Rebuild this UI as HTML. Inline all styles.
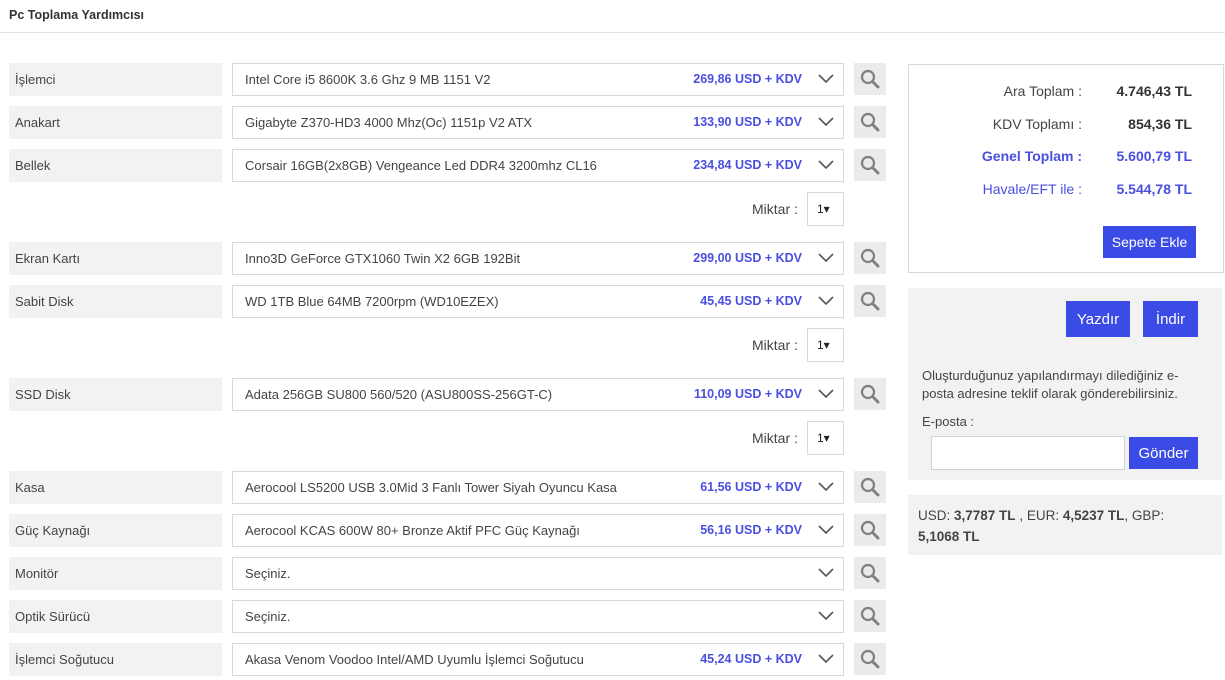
<!DOCTYPE html>
<html><head><meta charset="utf-8"><style>
*{margin:0;padding:0;box-sizing:border-box}
body{width:1225px;height:680px;background:#fff;font-family:"Liberation Sans",sans-serif;color:#333;position:relative;overflow:hidden;font-size:13px}
.abs{position:absolute}
.title{left:9px;top:8px;font-size:12.5px;font-weight:bold;color:#333}
.hr{left:0;top:32px;width:1225px;height:1px;background:#e2e2e2}
.lab{left:9px;width:213px;height:33px;background:#f2f2f2;line-height:33px;padding-left:6px;font-size:13px;color:#444}
.sel{left:232px;width:612px;height:33px;border:1px solid #d8d8d8;line-height:31px;padding-left:12px;font-size:13px;color:#444}
.sel .p{position:absolute;right:41px;top:0;color:#4a4fe0;font-weight:bold;font-size:12.5px}
.sel svg{position:absolute;right:9px;top:10px}
.sb{left:854px;width:32px;height:32px;background:#ebebeb}
.sb svg{position:absolute;left:6px;top:6px}
.mk{left:752px;font-size:14px;color:#444;line-height:34px}
.mb{left:807px;width:37px;height:34px;border:1px solid #d8d8d8;font-size:12px;line-height:32px;padding-left:9px;color:#222}
.btn{background:#3b4be6;color:#fff;font-size:14px;text-align:center}
</style></head><body>
<div class="abs title">Pc Toplama Yardımcısı</div>
<div class="abs hr"></div>

<div class="abs lab" style="top:63px">İşlemci</div>
<div class="abs sel" style="top:63px">Intel Core i5 8600K 3.6 Ghz 9 MB 1151 V2<span class="p">269,86 USD + KDV</span><svg width="16" height="10"><path d="M1 1l7 7 7-7" fill="none" stroke="#555" stroke-width="1.6"/></svg></div>
<div class="abs sb" style="top:63px"><svg width="20" height="20"><circle cx="8" cy="8" r="6" fill="none" stroke="#808080" stroke-width="2.2"/><path d="M12.5 12.5l5.5 5.5" stroke="#808080" stroke-width="3" stroke-linecap="round"/></svg></div>

<div class="abs lab" style="top:106px">Anakart</div>
<div class="abs sel" style="top:106px">Gigabyte Z370-HD3 4000 Mhz(Oc) 1151p V2 ATX<span class="p">133,90 USD + KDV</span><svg width="16" height="10"><path d="M1 1l7 7 7-7" fill="none" stroke="#555" stroke-width="1.6"/></svg></div>
<div class="abs sb" style="top:106px"><svg width="20" height="20"><circle cx="8" cy="8" r="6" fill="none" stroke="#808080" stroke-width="2.2"/><path d="M12.5 12.5l5.5 5.5" stroke="#808080" stroke-width="3" stroke-linecap="round"/></svg></div>

<div class="abs lab" style="top:149px">Bellek</div>
<div class="abs sel" style="top:149px">Corsair 16GB(2x8GB) Vengeance Led DDR4 3200mhz CL16<span class="p">234,84 USD + KDV</span><svg width="16" height="10"><path d="M1 1l7 7 7-7" fill="none" stroke="#555" stroke-width="1.6"/></svg></div>
<div class="abs sb" style="top:149px"><svg width="20" height="20"><circle cx="8" cy="8" r="6" fill="none" stroke="#808080" stroke-width="2.2"/><path d="M12.5 12.5l5.5 5.5" stroke="#808080" stroke-width="3" stroke-linecap="round"/></svg></div>
<div class="abs mk" style="top:192px">Miktar :</div><div class="abs mb" style="top:192px">1▾</div>

<div class="abs lab" style="top:242px">Ekran Kartı</div>
<div class="abs sel" style="top:242px">Inno3D GeForce GTX1060 Twin X2 6GB 192Bit<span class="p">299,00 USD + KDV</span><svg width="16" height="10"><path d="M1 1l7 7 7-7" fill="none" stroke="#555" stroke-width="1.6"/></svg></div>
<div class="abs sb" style="top:242px"><svg width="20" height="20"><circle cx="8" cy="8" r="6" fill="none" stroke="#808080" stroke-width="2.2"/><path d="M12.5 12.5l5.5 5.5" stroke="#808080" stroke-width="3" stroke-linecap="round"/></svg></div>

<div class="abs lab" style="top:285px">Sabit Disk</div>
<div class="abs sel" style="top:285px">WD 1TB Blue 64MB 7200rpm (WD10EZEX)<span class="p">45,45 USD + KDV</span><svg width="16" height="10"><path d="M1 1l7 7 7-7" fill="none" stroke="#555" stroke-width="1.6"/></svg></div>
<div class="abs sb" style="top:285px"><svg width="20" height="20"><circle cx="8" cy="8" r="6" fill="none" stroke="#808080" stroke-width="2.2"/><path d="M12.5 12.5l5.5 5.5" stroke="#808080" stroke-width="3" stroke-linecap="round"/></svg></div>
<div class="abs mk" style="top:328px">Miktar :</div><div class="abs mb" style="top:328px">1▾</div>

<div class="abs lab" style="top:378px">SSD Disk</div>
<div class="abs sel" style="top:378px">Adata 256GB SU800 560/520 (ASU800SS-256GT-C)<span class="p">110,09 USD + KDV</span><svg width="16" height="10"><path d="M1 1l7 7 7-7" fill="none" stroke="#555" stroke-width="1.6"/></svg></div>
<div class="abs sb" style="top:378px"><svg width="20" height="20"><circle cx="8" cy="8" r="6" fill="none" stroke="#808080" stroke-width="2.2"/><path d="M12.5 12.5l5.5 5.5" stroke="#808080" stroke-width="3" stroke-linecap="round"/></svg></div>
<div class="abs mk" style="top:421px">Miktar :</div><div class="abs mb" style="top:421px">1▾</div>

<div class="abs lab" style="top:471px">Kasa</div>
<div class="abs sel" style="top:471px">Aerocool LS5200 USB 3.0Mid 3 Fanlı Tower Siyah Oyuncu Kasa<span class="p">61,56 USD + KDV</span><svg width="16" height="10"><path d="M1 1l7 7 7-7" fill="none" stroke="#555" stroke-width="1.6"/></svg></div>
<div class="abs sb" style="top:471px"><svg width="20" height="20"><circle cx="8" cy="8" r="6" fill="none" stroke="#808080" stroke-width="2.2"/><path d="M12.5 12.5l5.5 5.5" stroke="#808080" stroke-width="3" stroke-linecap="round"/></svg></div>

<div class="abs lab" style="top:514px">Güç Kaynağı</div>
<div class="abs sel" style="top:514px">Aerocool KCAS 600W 80+ Bronze Aktif PFC Güç Kaynağı<span class="p">56,16 USD + KDV</span><svg width="16" height="10"><path d="M1 1l7 7 7-7" fill="none" stroke="#555" stroke-width="1.6"/></svg></div>
<div class="abs sb" style="top:514px"><svg width="20" height="20"><circle cx="8" cy="8" r="6" fill="none" stroke="#808080" stroke-width="2.2"/><path d="M12.5 12.5l5.5 5.5" stroke="#808080" stroke-width="3" stroke-linecap="round"/></svg></div>

<div class="abs lab" style="top:557px">Monitör</div>
<div class="abs sel" style="top:557px">Seçiniz.<svg width="16" height="10"><path d="M1 1l7 7 7-7" fill="none" stroke="#555" stroke-width="1.6"/></svg></div>
<div class="abs sb" style="top:557px"><svg width="20" height="20"><circle cx="8" cy="8" r="6" fill="none" stroke="#808080" stroke-width="2.2"/><path d="M12.5 12.5l5.5 5.5" stroke="#808080" stroke-width="3" stroke-linecap="round"/></svg></div>

<div class="abs lab" style="top:600px">Optik Sürücü</div>
<div class="abs sel" style="top:600px">Seçiniz.<svg width="16" height="10"><path d="M1 1l7 7 7-7" fill="none" stroke="#555" stroke-width="1.6"/></svg></div>
<div class="abs sb" style="top:600px"><svg width="20" height="20"><circle cx="8" cy="8" r="6" fill="none" stroke="#808080" stroke-width="2.2"/><path d="M12.5 12.5l5.5 5.5" stroke="#808080" stroke-width="3" stroke-linecap="round"/></svg></div>

<div class="abs lab" style="top:643px">İşlemci Soğutucu</div>
<div class="abs sel" style="top:643px">Akasa Venom Voodoo Intel/AMD Uyumlu İşlemci Soğutucu<span class="p">45,24 USD + KDV</span><svg width="16" height="10"><path d="M1 1l7 7 7-7" fill="none" stroke="#555" stroke-width="1.6"/></svg></div>
<div class="abs sb" style="top:643px"><svg width="20" height="20"><circle cx="8" cy="8" r="6" fill="none" stroke="#808080" stroke-width="2.2"/><path d="M12.5 12.5l5.5 5.5" stroke="#808080" stroke-width="3" stroke-linecap="round"/></svg></div>

<!-- right summary -->
<div class="abs" style="left:908px;top:64px;width:316px;height:209px;border:1px solid #d8d8d8"></div>
<div class="abs" style="left:930px;top:75px;width:152px;text-align:right;font-size:14px;line-height:32.5px;color:#444">Ara Toplam :<br>KDV Toplamı :<br><b style="color:#4a4fe0">Genel Toplam :</b><br><span style="color:#4a4fe0">Havale/EFT ile :</span></div>
<div class="abs" style="left:1090px;top:75px;width:102px;text-align:right;font-size:14px;line-height:32.5px;font-weight:bold;color:#333">4.746,43 TL<br>854,36 TL<br><span style="color:#4a4fe0">5.600,79 TL</span><br><span style="color:#4a4fe0">5.544,78 TL</span></div>
<div class="abs btn" style="left:1103px;top:226px;width:93px;height:32px;line-height:32px">Sepete Ekle</div>

<div class="abs" style="left:908px;top:288px;width:314px;height:192px;background:#f2f2f2"></div>
<div class="abs btn" style="left:1066px;top:301px;width:64px;height:36px;line-height:37px;font-size:15px">Yazdır</div>
<div class="abs btn" style="left:1143px;top:301px;width:55px;height:36px;line-height:37px;font-size:15px">İndir</div>
<div class="abs" style="left:922px;top:367px;width:275px;font-size:13px;line-height:18px;color:#444">Oluşturduğunuz yapılandırmayı dilediğiniz e-posta adresine teklif olarak gönderebilirsiniz.</div>
<div class="abs" style="left:922px;top:414px;font-size:13px;color:#444">E-posta :</div>
<div class="abs" style="left:931px;top:436px;width:194px;height:34px;background:#fff;border:1px solid #d0d0d0"></div>
<div class="abs btn" style="left:1129px;top:437px;width:69px;height:32px;line-height:33px;font-size:15px">Gönder</div>

<div class="abs" style="left:908px;top:495px;width:314px;height:60px;background:#f2f2f2"></div>
<div class="abs" style="left:918px;top:505px;width:290px;font-size:13.5px;line-height:21px;color:#444">USD: <b>3,7787 TL</b> , EUR: <b>4,5237 TL</b>, GBP: <b>5,1068 TL</b></div>
</body></html>
